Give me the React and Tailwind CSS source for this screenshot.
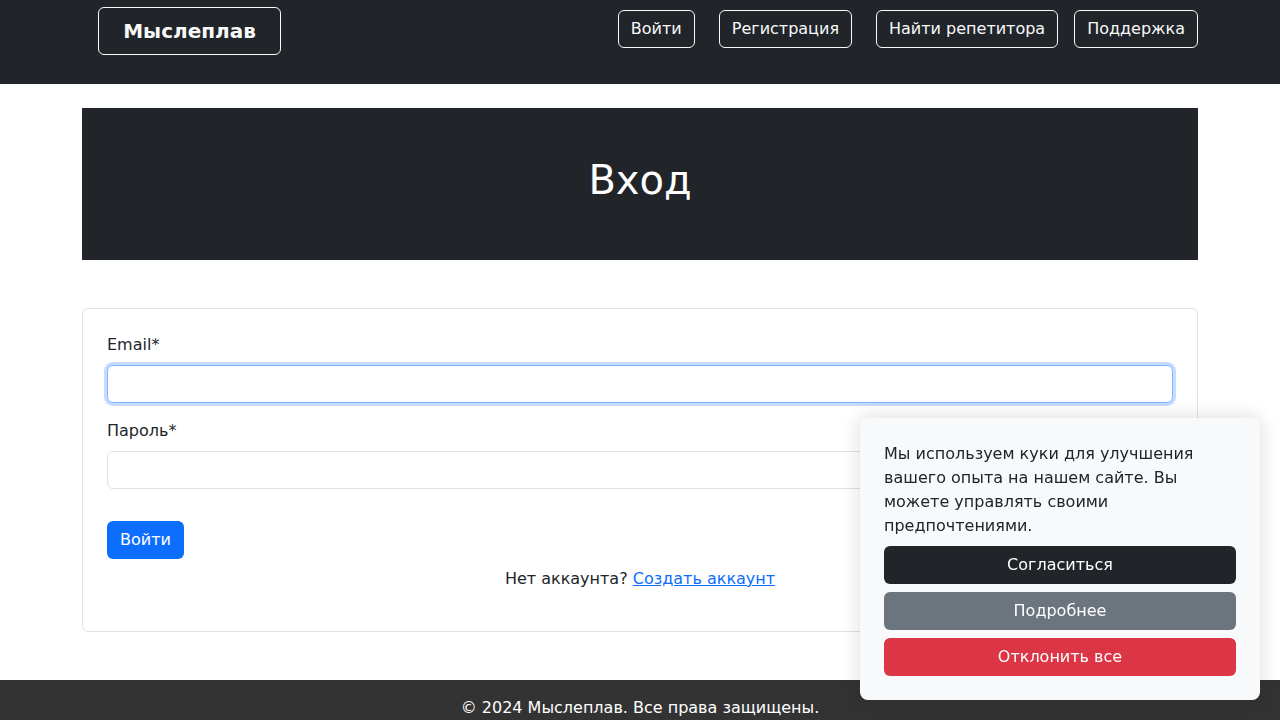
export default function App() {
  const font = { fontFamily: '"DejaVu Sans", "Noto Sans", sans-serif' };
  return (
    <div style={font} className="min-h-[720px] bg-white text-[#212529] text-base leading-6 flex flex-col">
      <nav className="bg-[#212529] h-[84px]">
        <div className="w-[1116px] mx-auto flex items-start justify-between">
          <a className="ml-4 mt-[7px] w-[183px] h-[48px] flex items-center justify-center border border-[#f8f9fa] rounded-md text-[#f8f9fa] font-bold text-xl">
            Мыслеплав
          </a>
          <div className="flex mt-[10px]">
            <a className="h-[38px] px-3 flex items-center border border-[#f8f9fa] rounded-md text-[#f8f9fa]">Войти</a>
            <a className="ml-6 h-[38px] px-3 flex items-center border border-[#f8f9fa] rounded-md text-[#f8f9fa]">Регистрация</a>
            <a className="ml-6 h-[38px] px-3 flex items-center border border-[#f8f9fa] rounded-md text-[#f8f9fa]">Найти репетитора</a>
            <a className="ml-4 h-[38px] px-3 flex items-center border border-[#f8f9fa] rounded-md text-[#f8f9fa]">Поддержка</a>
          </div>
        </div>
      </nav>

      <main className="w-[1116px] mx-auto mt-6 flex-1">
        <div className="bg-[#212529] h-[152px] pt-12 text-center">
          <h1 className="text-[40px] leading-[48px] text-white mb-2">Вход</h1>
        </div>

        <div className="mt-12 mb-12 border border-[#dee2e6] rounded-md p-6">
          <label className="block mb-2">Email*</label>
          <div className="h-[38px] rounded-md border border-[#86b7fe] shadow-[0_0_0_3px_rgba(13,110,253,0.25)] bg-white" />
          <label className="block mt-4 mb-2">Пароль*</label>
          <div className="h-[38px] rounded-md border border-[#dee2e6] bg-white" />
          <button className="mt-8 h-[38px] px-[13px] rounded-md bg-[#0d6efd] text-white">Войти</button>
          <p className="mt-2 mb-4 text-center">
            Нет аккаунта? <a className="text-[#0d6efd] underline">Создать аккаунт</a>
          </p>
        </div>
      </main>

      <footer className="bg-[#333333] text-white text-center pt-4 pb-4 leading-6">
        © 2024 Мыслеплав. Все права защищены.
      </footer>

      <div className="fixed right-5 bottom-5 w-[400px] bg-[#f8f9fa] rounded-lg p-6 shadow-[0_0_20px_rgba(0,0,0,0.15)]">
        <p className="mb-2 text-[#212529]">
          Мы используем куки для улучшения вашего опыта на нашем сайте. Вы можете управлять своими предпочтениями.
        </p>
        <div className="flex flex-col gap-2">
          <button className="h-[38px] rounded-md bg-[#212529] text-white">Согласиться</button>
          <button className="h-[38px] rounded-md bg-[#6c757d] text-white">Подробнее</button>
          <button className="h-[38px] rounded-md bg-[#dc3545] text-white">Отклонить все</button>
        </div>
      </div>
    </div>
  );
}
